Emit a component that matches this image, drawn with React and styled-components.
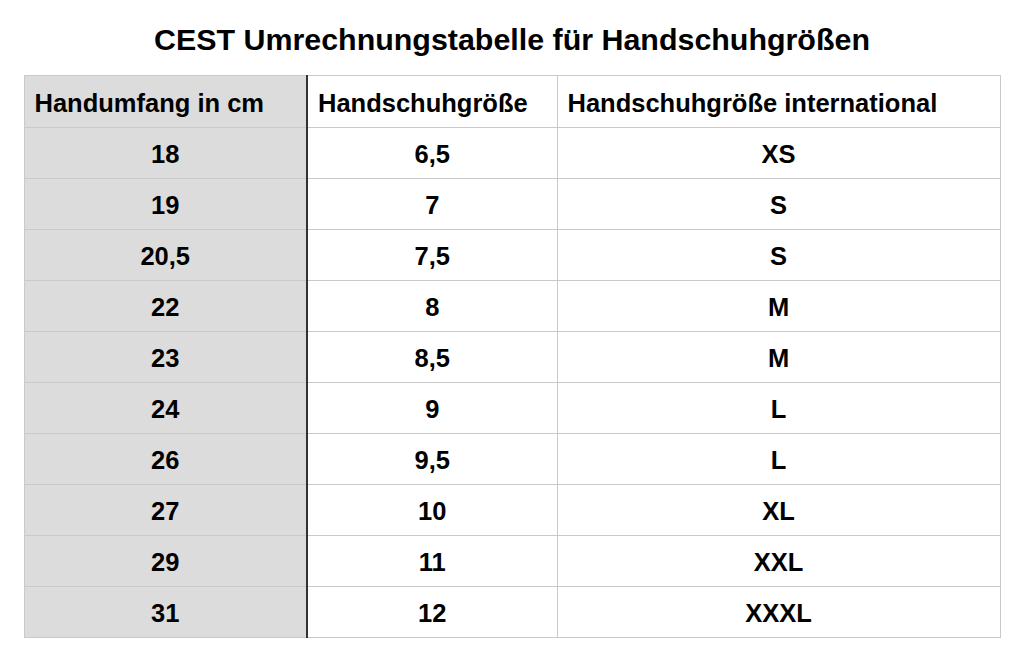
import React from 'react'
import styled, { createGlobalStyle } from 'styled-components'

const GlobalStyle = createGlobalStyle`
    html, body {
        margin: 0;
        padding: 0;
        background: #ffffff;
    }
    body {
        font-family: "Liberation Sans", Arial, Helvetica, sans-serif;
        color: #000000;
    }
`

const Page = styled.div`
    width: 1024px;
    height: 659px;
    display: flex;
    flex-direction: column;
    align-items: center;
`

const Title = styled.h1`
    margin: 0;
    height: 75px;
    padding-top: 4px;
    box-sizing: border-box;
    display: flex;
    align-items: center;
    justify-content: center;
    font-size: 30.4px;
    font-weight: bold;
`

const Table = styled.table`
    width: 976px;
    border-collapse: collapse;
    table-layout: fixed;
    font-size: 25.5px;
    font-weight: bold;
`

const Cell = styled.td`
    height: ${(props) => (props.head ? '48px' : '47px')};
    padding: ${(props) => (props.head ? '3px 10px 0 10px' : '3px 0 0')};
    border: 1px solid #c9c9c9;
    text-align: ${(props) => (props.head ? 'left' : 'center')};
    background: ${(props) => (props.first ? '#dcdcdc' : '#ffffff')};
    border-right: ${(props) => (props.first ? '2px solid #333333' : '1px solid #c9c9c9')};
    white-space: nowrap;
`

const rows = [
    ['18', '6,5', 'XS'],
    ['19', '7', 'S'],
    ['20,5', '7,5', 'S'],
    ['22', '8', 'M'],
    ['23', '8,5', 'M'],
    ['24', '9', 'L'],
    ['26', '9,5', 'L'],
    ['27', '10', 'XL'],
    ['29', '11', 'XXL'],
    ['31', '12', 'XXXL'],
]

const App = () => {
    return (
        <Page>
            <GlobalStyle />
            <Title>CEST Umrechnungstabelle für Handschuhgrößen</Title>
            <Table>
                <colgroup>
                    <col style={{ width: '283px' }} />
                    <col style={{ width: '250px' }} />
                    <col style={{ width: '443px' }} />
                </colgroup>
                <thead>
                    <tr>
                        <Cell as="th" head first>Handumfang in cm</Cell>
                        <Cell as="th" head>Handschuhgröße</Cell>
                        <Cell as="th" head>Handschuhgröße international</Cell>
                    </tr>
                </thead>
                <tbody>
                    {rows.map((row) => (
                        <tr key={row[0]}>
                            <Cell first>{row[0]}</Cell>
                            <Cell>{row[1]}</Cell>
                            <Cell>{row[2]}</Cell>
                        </tr>
                    ))}
                </tbody>
            </Table>
        </Page>
    )
}

export default App
